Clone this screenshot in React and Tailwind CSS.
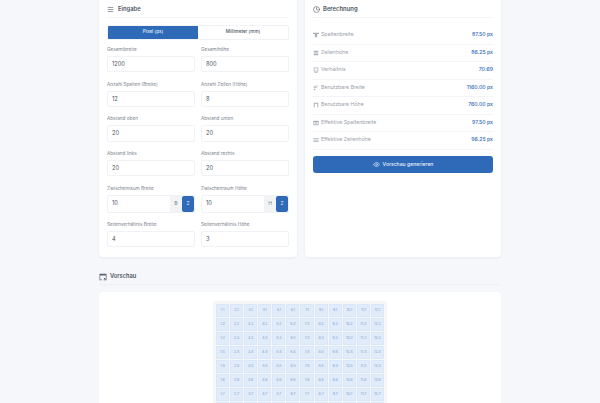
import { Menu, Clock, Eye } from 'lucide-react'

const fields = [
  [{ label: 'Gesamtbreite', value: '1200' }, { label: 'Gesamthöhe', value: '800' }],
  [{ label: 'Anzahl Spalten (Breite)', value: '12' }, { label: 'Anzahl Zeilen (Höhe)', value: '8' }],
  [{ label: 'Abstand oben', value: '20' }, { label: 'Abstand unten', value: '20' }],
  [{ label: 'Abstand links', value: '20' }, { label: 'Abstand rechts', value: '20' }],
  [{ label: 'Zwischenraum Breite', value: '10', unit: 'B' }, { label: 'Zwischenraum Höhe', value: '10', unit: 'H' }],
  [{ label: 'Seitenverhältnis Breite', value: '4' }, { label: 'Seitenverhältnis Höhe', value: '3' }],
]

const results = [
  ['Spaltenbreite', '87.50 px', 'columns'],
  ['Zeilenhöhe', '86.25 px', 'rows'],
  ['Verhältnis', '70:69', 'ratio'],
  ['Benutzbare Breite', '1160.00 px', 'width'],
  ['Benutzbare Höhe', '760.00 px', 'height'],
  ['Effektive Spaltenbreite', '97.50 px', 'columns2'],
  ['Effektive Zeilenhöhe', '96.25 px', 'rows2'],
]

function RowIcon({ type }) {
  return (
    <svg width="6" height="6" viewBox="0 0 8 8" fill="#a8afb9" className="shrink-0">
      {type === 'columns' && <path d="M0 1h8v1.5H5.5V7h-3V2.5H0z" />}
      {type === 'rows' && <path d="M1 1h6v1.5H1zM1 3.2h6v1.5H1zM1 5.4h6V7H1z" />}
      {type === 'ratio' && <path fillRule="evenodd" d="M1 .5h6v5.5H1zM2 1.5v3.5h4V1.5zM2 6.8h4v.8H2z" />}
      {type === 'width' && <path d="M1 1h6v1H1zM1 3h4v1H1zM1 5h2v2H1z" />}
      {type === 'height' && <path d="M1 1h6v1.2H1zM1 2h1.3v5H1zM5.7 2H7v5H5.7z" />}
      {type === 'columns2' && <path fillRule="evenodd" d="M.5 1h7v6h-7zM1.5 3v3h1.2V3zM3.4 3v3h1.2V3zM5.3 3v3h1.2V3z" />}
      {type === 'rows2' && <path d="M.5 1.5h7v1.3h-7zM.5 3.5h7v1.3h-7zM.5 5.5h7v1.3h-7z" />}
    </svg>
  )
}

function PreviewIcon() {
  return (
    <svg width="8" height="8" viewBox="0 0 8 8" className="shrink-0 text-[#5b6470]">
      <path fill="currentColor" fillRule="evenodd" d="M.5.8h7v6.4h-3V6.5h2.3V2.4H1.2v4.1h1.6v.7H.5z" />
      <rect x="5" y="5" width="1.3" height="1.3" fill="currentColor" />
    </svg>
  )
}

function Field({ label, value, unit }) {
  return (
    <div className="flex flex-col gap-[3px]">
      <label className="text-[4.7px] leading-[8px] text-[#7b828d]">{label}</label>
      {unit ? (
        <div className="flex h-[18px] rounded-[2px] overflow-hidden border border-[#f0f2f5] bg-white">
          <div className="flex-1 flex items-center pl-[4px] text-[5.7px] text-[#4b5563]">{value}</div>
          <div className="w-[12px] flex items-center justify-center bg-[#f1f3f6] text-[5px] text-[#7b828d]">{unit}</div>
          <div className="w-[12px] flex items-center justify-center rounded-[2px] bg-[#2f6ab8] text-[5px] text-[#dfe9f6]">Z</div>
        </div>
      ) : (
        <div className="h-[16.4px] flex items-center pl-[4px] rounded-[2px] border border-[#f0f2f5] bg-white text-[5.7px] text-[#4b5563]">{value}</div>
      )}
    </div>
  )
}

export default function App() {
  const columns = Array.from({ length: 12 }, (_, i) => i + 1)
  const rows = Array.from({ length: 8 }, (_, i) => i + 1)

  return (
    <div className="h-[403px] overflow-hidden bg-[#f5f7fa] font-['Inter',sans-serif]">
      <div className="w-[402px] mx-auto -mt-[8px] flex flex-col">
        <div className="flex gap-[8px]">
          <div className="w-[198px] h-[265px] bg-white rounded-[4px] shadow-[0_1px_3px_rgba(0,0,0,0.06)] px-[8px] pt-[10px]">
            <div className="flex items-center gap-[4px] h-[16px] pb-[1px] border-b border-[#f3f4f7] text-[#4b5563]">
              <Menu size={7} strokeWidth={2} />
              <span className="text-[5.8px] font-semibold">Eingabe</span>
            </div>
            <div className="flex h-[15px] mt-[7px] rounded-[2px] border border-[#f0f2f5] overflow-hidden text-[4.6px] font-medium">
              <div className="w-1/2 flex items-center justify-center bg-[#2f6ab8] text-[#dfe9f6]">Pixel (px)</div>
              <div className="w-1/2 flex items-center justify-center bg-white text-[#4b5563]">Millimeter (mm)</div>
            </div>
            <div className="grid grid-cols-2 gap-x-[6px] gap-y-[7.3px] mt-[5px]">
              {fields.flat().map(f => <Field key={f.label} {...f} />)}
            </div>
          </div>
          <div className="w-[196px] h-[265px] bg-white rounded-[4px] shadow-[0_1px_3px_rgba(0,0,0,0.06)] px-[8px] pt-[10px]">
            <div className="flex items-center gap-[3px] h-[16px] pb-[1px] border-b border-[#f3f4f7] text-[#4b5563]">
              <Clock size={7} strokeWidth={2} />
              <span className="text-[5.9px] font-semibold">Berechnung</span>
            </div>
            <div className="flex flex-col mt-[9px]">
              {results.map(([label, value, type]) => (
                <div key={label} className="h-[17.5px] flex items-center justify-between border-b border-[#f3f4f7]">
                  <span className="flex items-center gap-[2px] text-[5.2px] text-[#9aa1ab]">
                    <RowIcon type={type} />
                    {label}
                  </span>
                  <span className="text-[5.2px] font-medium text-[#2f6ab8]">{value}</span>
                </div>
              ))}
            </div>
            <div className="h-[17px] mt-[6.5px] flex items-center justify-center gap-[3px] rounded-[3px] bg-[#2f6ab8] text-[#eaf1fa] text-[5.1px] font-medium">
              <Eye size={7} />
              Vorschau generieren
            </div>
          </div>
        </div>
        <div className="flex items-center gap-[3px] h-[16px] mt-[12px] border-b border-[#eff1f5]">
          <PreviewIcon />
          <span className="text-[5.7px] font-semibold text-[#4b5563]">Vorschau</span>
        </div>
        <div className="h-[120px] mt-[7px] bg-white rounded-t-[4px] flex justify-center pt-[9px]">
          <div className="w-[174px] h-[116px] overflow-hidden bg-[#f5f6f7] p-[3px] grid grid-cols-12 auto-rows-[13px] gap-[1px]">
            {rows.flatMap(r => columns.map(c => (
              <div key={`${c}.${r}`} className="flex items-center justify-center bg-[#e0ecfa] border border-[#d9e7f8] text-[3.5px] text-[#7fa0cc]">
                {r < 8 ? `${c}.${r}` : ''}
              </div>
            )))}
          </div>
        </div>
      </div>
    </div>
  )
}
